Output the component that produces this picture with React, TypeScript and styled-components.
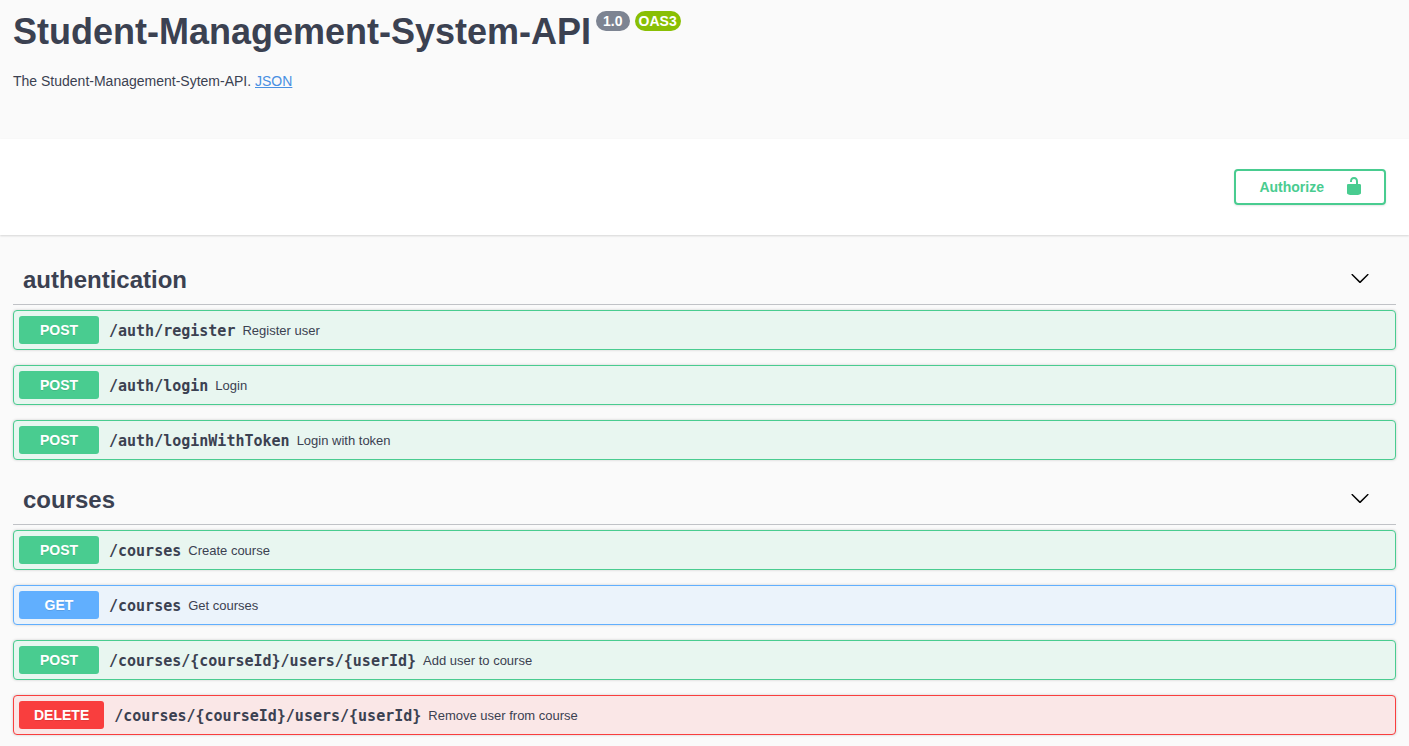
import React, { useState } from "react";
import styled, { createGlobalStyle } from "styled-components";

const GlobalStyle = createGlobalStyle`
  *, *::before, *::after { box-sizing: border-box; }
  body {
    margin: 0;
    background: #fafafa;
    color: #3b4151;
    font-family: "Liberation Sans", Arial, sans-serif;
    font-size: 14px;
  }
  button { font: inherit; color: inherit; cursor: pointer; }
`;

type Method = "POST" | "GET" | "DELETE";

const methodColors: Record<Method, { solid: string; tint: string }> = {
  POST: { solid: "#49cc90", tint: "#e8f6f0" },
  GET: { solid: "#61affe", tint: "#ebf3fb" },
  DELETE: { solid: "#f93e3e", tint: "#fae7e7" },
};

const Info = styled.header`
  padding: 11px 13px 50px;
`;

const TitleRow = styled.div`
  display: flex;
  align-items: flex-start;
  gap: 5px;
`;

const Title = styled.h1`
  margin: 0;
  font-size: 36px;
  line-height: 41px;
`;

const Badge = styled.small<{ $color: string; $padding: number }>`
  padding: 0 ${(p) => p.$padding}px;
  border-radius: 10px;
  background: ${(p) => p.$color};
  color: #fff;
  font-size: 14px;
  font-weight: 700;
  line-height: 20px;
`;

const Description = styled.p`
  margin: 21px 0 0;
  line-height: 16px;
`;

const JsonLink = styled.a`
  color: #4990e2;
`;

const SchemeBar = styled.section`
  display: flex;
  justify-content: flex-end;
  padding: 30px 23px;
  background: #fff;
  box-shadow: 0 1px 2px rgba(0, 0, 0, 0.15);
`;

const AuthorizeButton = styled.button`
  display: flex;
  align-items: center;
  gap: 20px;
  height: 36px;
  padding: 0 20px 0 23px;
  border: 2px solid #49cc90;
  border-radius: 4px;
  background: transparent;
  box-shadow: 0 1px 2px rgba(0, 0, 0, 0.1);
  color: #49cc90;
  font-weight: 700;

  svg { margin-bottom: 2px; }
`;

const Content = styled.main`
  display: grid;
  gap: 15px;
  padding: 20px 13px 10px;
`;

const TagHeading = styled.h2`
  margin: 0 0 5px;
  border-bottom: 1px solid rgba(59, 65, 81, 0.3);
  font-size: 24px;
`;

const TagToggle = styled.button`
  display: flex;
  align-items: center;
  justify-content: space-between;
  width: 100%;
  height: 49px;
  padding: 0 26px 0 10px;
  border: 0;
  background: none;
  text-align: left;

  svg { margin-bottom: 3px; }
`;

const OperationList = styled.div`
  display: grid;
  gap: 15px;
`;

const OperationRow = styled.button<{ $method: Method }>`
  display: flex;
  align-items: center;
  width: 100%;
  padding: 5px;
  border: 1px solid ${(p) => methodColors[p.$method].solid};
  border-radius: 4px;
  background: ${(p) => methodColors[p.$method].tint};
  box-shadow: 0 0 3px rgba(0, 0, 0, 0.19);
  text-align: left;
`;

const MethodLabel = styled.span<{ $method: Method }>`
  min-width: 80px;
  padding: 6px 15px;
  border-radius: 3px;
  background: ${(p) => methodColors[p.$method].solid};
  color: #fff;
  font-weight: 700;
  line-height: 16px;
  text-align: center;
  text-shadow: 0 1px 0 rgba(0, 0, 0, 0.1);
`;

const Path = styled.span`
  padding: 2px 7px 0 10px;
  font-family: Consolas, "DejaVu Sans Mono", monospace;
  font-size: 15px;
  font-weight: 700;
  line-height: 18px;
`;

const Summary = styled.span`
  font-size: 13px;
`;

const UnlockedIcon = () => (
  <svg width="20" height="20" viewBox="0 0 20 20" fill="currentColor" aria-hidden="true">
    <path d="M15.8 8H14V5.6C14 2.703 12.665 1 10 1 7.334 1 6 2.703 6 5.6V6h2v-.801C8 3.754 8.797 3 10 3c1.203 0 2 .754 2 2.199V8H4c-.553 0-1 .646-1 1.199V17c0 .549.428 1.139.951 1.307l1.197.387C5.672 18.861 6.55 19 7.1 19h5.8c.549 0 1.428-.139 1.951-.307l1.196-.387c.524-.167.953-.757.953-1.306V9.199C17 8.646 16.352 8 15.8 8z" />
  </svg>
);

const ArrowIcon = () => (
  <svg width="20" height="20" viewBox="0 0 20 20" fill="#000" aria-hidden="true">
    <path d="M17.418 6.109c.272-.268.709-.268.979 0s.271.701 0 .969l-7.908 7.83c-.27.268-.707.268-.979 0l-7.908-7.83c-.27-.268-.27-.701 0-.969.271-.268.709-.268.979 0L10 13.25l7.418-7.141z" />
  </svg>
);

interface Operation {
  method: Method;
  path: string;
  summary: string;
}

const tags: { name: string; operations: Operation[] }[] = [
  {
    name: "authentication",
    operations: [
      { method: "POST", path: "/auth/register", summary: "Register user" },
      { method: "POST", path: "/auth/login", summary: "Login" },
      { method: "POST", path: "/auth/loginWithToken", summary: "Login with token" },
    ],
  },
  {
    name: "courses",
    operations: [
      { method: "POST", path: "/courses", summary: "Create course" },
      { method: "GET", path: "/courses", summary: "Get courses" },
      { method: "POST", path: "/courses/{courseId}/users/{userId}", summary: "Add user to course" },
      { method: "DELETE", path: "/courses/{courseId}/users/{userId}", summary: "Remove user from course" },
    ],
  },
];

function TagSection({ name, operations }: { name: string; operations: Operation[] }) {
  const [open, setOpen] = useState(true);
  return (
    <section>
      <TagHeading>
        <TagToggle type="button" aria-expanded={open} onClick={() => setOpen(!open)}>
          {name}
          <ArrowIcon />
        </TagToggle>
      </TagHeading>
      {open && (
        <OperationList>
          {operations.map((op) => (
            <OperationRow key={op.method + op.path} type="button" $method={op.method}>
              <MethodLabel $method={op.method}>{op.method}</MethodLabel>
              <Path>{op.path}</Path>
              <Summary>{op.summary}</Summary>
            </OperationRow>
          ))}
        </OperationList>
      )}
    </section>
  );
}

export default function App() {
  return (
    <>
      <GlobalStyle />
      <Info>
        <TitleRow>
          <Title>Student-Management-System-API</Title>
          <Badge $color="#7d8492" $padding={7}>1.0</Badge>
          <Badge $color="#89bf04" $padding={4}>OAS3</Badge>
        </TitleRow>
        <Description>
          The Student-Management-Sytem-API. <JsonLink href="#json">JSON</JsonLink>
        </Description>
      </Info>
      <SchemeBar>
        <AuthorizeButton type="button">
          Authorize
          <UnlockedIcon />
        </AuthorizeButton>
      </SchemeBar>
      <Content>
        {tags.map((tag) => (
          <TagSection key={tag.name} {...tag} />
        ))}
      </Content>
    </>
  );
}
